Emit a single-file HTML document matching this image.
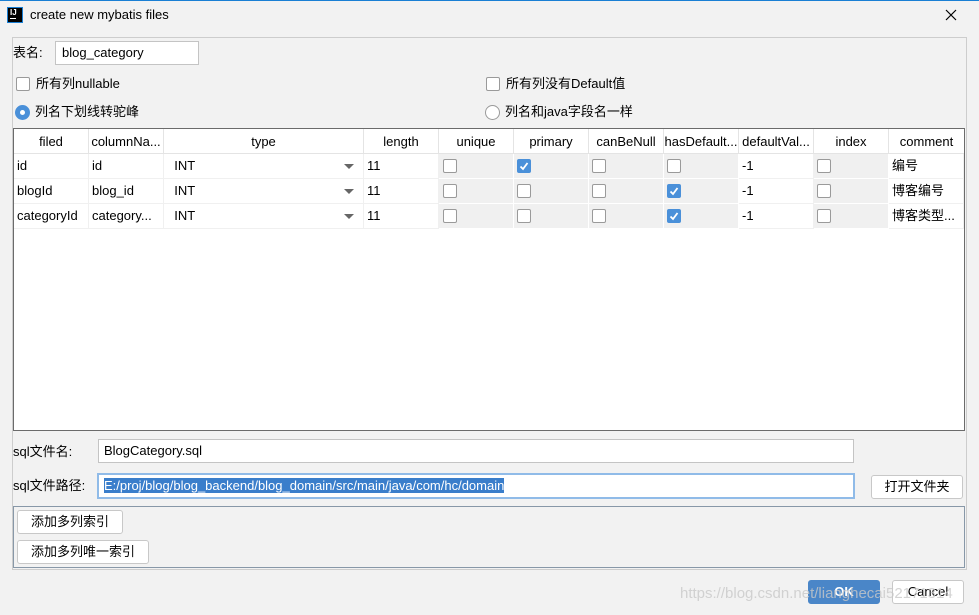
<!DOCTYPE html>
<html><head><meta charset="utf-8"><style>
*{box-sizing:border-box;margin:0;padding:0}
body{width:979px;height:615px;background:#f2f2f2;font-family:"Liberation Sans","Noto Sans CJK SC",sans-serif;font-size:13px;color:#000;position:relative;overflow:hidden}
.a{position:absolute;line-height:16px;white-space:nowrap}
.cb{position:absolute;width:14px;height:14px;border:1px solid #9a9a9a;border-radius:2px;background:#fff}
.cb.on{background:#4a90d9;border-color:#4a90d9}
.cb.on svg{position:absolute;left:0px;top:0px}
.inp{position:absolute;background:#fff;border:1px solid #c4c4c4;padding-left:6px;line-height:22px;white-space:nowrap}
.btn{position:absolute;background:#fff;border:1px solid #c8c8c8;border-radius:3px;text-align:center;line-height:21px;white-space:nowrap}
.hd{position:absolute;top:0;height:25px;line-height:25px;text-align:center;border-right:1px solid #e4e4e4;background:#fff;white-space:nowrap;overflow:hidden}
.c{position:absolute;height:25px;line-height:24px;padding-left:3px;border-right:1px solid #f0f0f0;border-bottom:1px solid #f0f0f0;white-space:nowrap;overflow:hidden}
.g{background:#f0f0f0;border-right:1px solid #fff;border-bottom:1px solid #fff}
.w{background:#fff}
.arr{position:absolute;right:9px;top:10px;width:0;height:0;border-left:5px solid transparent;border-right:5px solid transparent;border-top:5px solid #666}
</style></head><body>
<div class="a" style="left:0;top:0;width:979px;height:1px;background:#1a7fd4"></div>
<div class="a" style="left:7px;top:7px;width:16px;height:16px;background:#000;border:1px solid #1a7fd4;color:#fff;font-size:8px;font-weight:bold;line-height:9px;padding-left:2px">IJ<div style="width:6px;height:1px;background:#fff;margin-top:1px"></div></div>
<div class="a" style="left:30px;top:7px;font-size:13px">create new mybatis files</div>
<svg class="a" style="left:945px;top:9px" width="12" height="12" viewBox="0 0 12 12"><path d="M1 1L11 11M11 1L1 11" stroke="#000" stroke-width="1.2"/></svg>
<div class="a" style="left:12px;top:37px;width:955px;height:533px;border:1px solid #cdcdcd"></div>

<div class="a" style="left:13px;top:45px">表名:</div>
<div class="inp" style="left:55px;top:41px;width:144px;height:24px">blog_category</div>

<div class="cb" style="left:16px;top:77px"></div>
<div class="a" style="left:36px;top:76px">所有列nullable</div>
<div class="cb" style="left:486px;top:77px"></div>
<div class="a" style="left:506px;top:76px">所有列没有Default值</div>
<div class="a" style="left:15px;top:105px;width:15px;height:15px;border-radius:50%;background:#4a90d9"><div style="position:absolute;left:5px;top:5px;width:5px;height:5px;border-radius:50%;background:#fff"></div></div>
<div class="a" style="left:35px;top:104px">列名下划线转驼峰</div>
<div class="a" style="left:485px;top:105px;width:15px;height:15px;border-radius:50%;background:#fff;border:1px solid #9a9a9a"></div>
<div class="a" style="left:505px;top:104px">列名和java字段名一样</div>

<div class="a" style="left:13px;top:128px;width:952px;height:303px;border:1px solid #6b6b6b;background:#fff;overflow:hidden">
<div class="hd" style="left:0;width:75px">filed</div>
<div class="hd" style="left:75px;width:75px">columnNa...</div>
<div class="hd" style="left:150px;width:200px">type</div>
<div class="hd" style="left:350px;width:75px">length</div>
<div class="hd" style="left:425px;width:75px">unique</div>
<div class="hd" style="left:500px;width:75px">primary</div>
<div class="hd" style="left:575px;width:75px">canBeNull</div>
<div class="hd" style="left:650px;width:75px">hasDefault...</div>
<div class="hd" style="left:725px;width:75px">defaultVal...</div>
<div class="hd" style="left:800px;width:75px">index</div>
<div class="hd" style="left:875px;width:75px;border-right:0">comment</div>
<div class="a" style="left:0;top:24px;width:950px;height:1px;background:#e4e4e4"></div>
</div>
<div id="rows"></div>
<script>
var rows=[["id","id","编号",[0,1,0,0]],["blogId","blog_id","博客编号",[0,0,0,1]],["categoryId","category...","博客类型...",[0,0,0,1]]];
var h="";var chk='<svg width="12" height="12" viewBox="0 0 12 12"><path d="M2.5 6.5 L5 9 L9.5 3" stroke="#fff" stroke-width="1.8" fill="none"/></svg>';
rows.forEach(function(r,i){var y=154+i*25;var L=14;
function cell(x,w,cls,t){h+='<div class="c '+cls+'" style="left:'+x+'px;top:'+y+'px;width:'+w+'px">'+t+'</div>';}
function box(x,on){h+='<div class="cb'+(on?' on':'')+'" style="left:'+x+'px;top:'+(y+5)+'px">'+(on?chk:'')+'</div>';}
cell(L,75,"w",r[0]);cell(L+75,75,"w",r[1]);
cell(L+150,200,"w",'&nbsp;&nbsp;INT<div class="arr"></div>');
cell(L+350,75,"w","11");
[425,500,575,650].forEach(function(x,k){cell(L+x,75,"g","");box(L+x+3+(k==0?1:0),r[3][k]);});
cell(L+725,75,"w","-1");cell(L+800,75,"g","");box(L+803,0);cell(L+875,75,"w",r[2]);
});
document.getElementById("rows").innerHTML=h;
</script>

<div class="a" style="left:13px;top:444px">sql文件名:</div>
<div class="inp" style="left:98px;top:439px;width:756px;height:24px;padding-left:5px">BlogCategory.sql</div>
<div class="a" style="left:13px;top:478px">sql文件路径:</div>
<div class="inp" style="left:97px;top:473px;width:758px;height:26px;border:2px solid #90bbe8;padding-left:5px;line-height:21px"><span style="background:#3a7ecb;color:#fff">E:/proj/blog/blog_backend/blog_domain/src/main/java/com/hc/domain</span></div>
<div class="btn" style="left:871px;top:475px;width:92px;height:24px">打开文件夹</div>

<div class="a" style="left:13px;top:506px;width:952px;height:62px;border:1px solid #8898a8"></div>
<div class="btn" style="left:17px;top:510px;width:106px;height:24px">添加多列索引</div>
<div class="btn" style="left:17px;top:540px;width:132px;height:24px">添加多列唯一索引</div>

<div class="btn" style="left:808px;top:580px;width:72px;height:24px;background:#4a86c8;border-color:#4a86c8;color:#fff;font-weight:bold">OK</div>
<div class="btn" style="left:892px;top:580px;width:72px;height:24px">Cancel</div>
<div class="a" style="left:680px;top:586px;color:rgba(200,200,200,0.8);font-size:15px">https://blog.csdn.net/lianghecai52171314</div>
</body></html>
